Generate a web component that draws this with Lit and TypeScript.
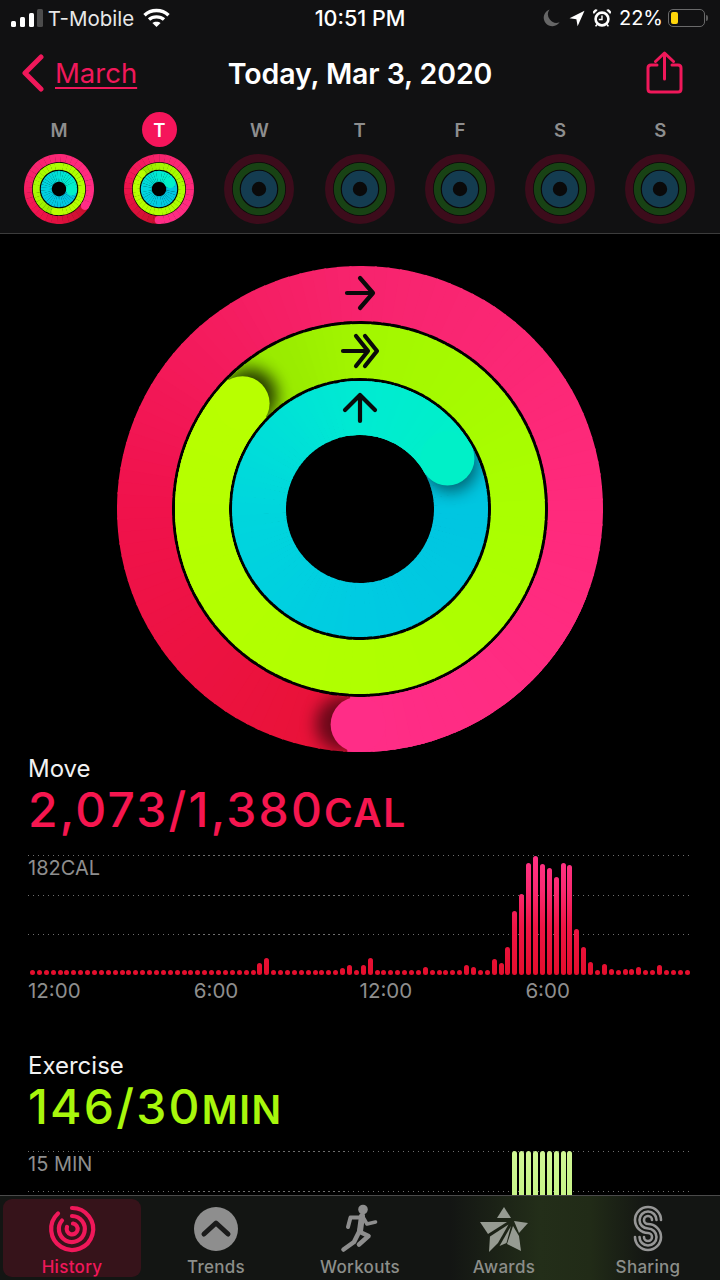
import { LitElement, css, html, svg } from 'lit';
import { customElement, property } from 'lit/decorators.js';

type Stop = [number, string];
interface Ring { r: number; w: number; cap: number; stops: Stop[]; shade?: number; }

const pt = (r: number, deg: number) => {
    const a = (deg * Math.PI) / 180;
    return [r * Math.sin(a), -r * Math.cos(a)];
};

const hex = (c: string) => [1, 3, 5].map((i) => parseInt(c.slice(i, i + 2), 16));

const colorAt = (stops: Stop[], off: number) => {
    for (let i = 1; i < stops.length; i++) {
        if (off <= stops[i][0]) {
            const [a, ca] = stops[i - 1];
            const [b, cb] = stops[i];
            const t = (off - a) / (b - a);
            const x = hex(ca);
            const y = hex(cb);
            return `rgb(${x.map((v, j) => Math.round(v + (y[j] - v) * t)).join(',')})`;
        }
    }
    return stops[stops.length - 1][1];
};

const arcs = (ring: Ring, from: number, to: number, step: number) => {
    const out = [];
    for (let off = from; off < to; off += step) {
        const [x0, y0] = pt(ring.r, ring.cap + off);
        const [x1, y1] = pt(ring.r, ring.cap + off + step + 0.5);
        out.push(svg`<path d="M${x0} ${y0}A${ring.r} ${ring.r} 0 0 1 ${x1} ${y1}" stroke=${colorAt(ring.stops, off)} stroke-width=${ring.w} fill="none"/>`);
    }
    return out;
};

const redStops = (first: string): Stop[] => [[0, first], [90, '#f0124c'], [180, '#f7246e'], [270, '#ff2a7c'], [360, '#ff2d87']];
const greenStops: Stop[] = [[0, '#94e400'], [49, '#a3f700'], [139, '#aaff00'], [229, '#b0ff00'], [360, '#b8ff00']];
const blueStops: Stop[] = [[0, '#00c4e0'], [119, '#00cbe2'], [209, '#00d6dd'], [299, '#00ebd2'], [360, '#00f0c8']];

const bigRings: Ring[] = [
    { r: 215.5, w: 55, cap: 180.5, stops: redStops('#e81236'), shade: 0.55 },
    { r: 158, w: 54, cap: 312, stops: greenStops, shade: 0.75 },
    { r: 101, w: 54, cap: 60, stops: blueStops, shade: 0.5 },
];

const smallRings = (caps: number[]): Ring[] => [
    { r: 215, w: 56, cap: caps[0], stops: redStops('#c90f2c') },
    { r: 158, w: 48, cap: caps[1], stops: greenStops },
    { r: 88, w: 76, cap: caps[2], stops: blueStops },
];

const capDot = (ring: Ring) => {
    const [x, y] = pt(ring.r, ring.cap);
    return svg`<circle cx=${x} cy=${y} r=${ring.w / 2} fill=${ring.stops[ring.stops.length - 1][1]}/>`;
};

function bigActivity() {
    return svg`<svg class="big" viewBox="-243 -243 486 486">
        <defs>
            <filter id="soft" x="-60%" y="-60%" width="220%" height="220%"><feGaussianBlur stdDeviation="8"/></filter>
            ${bigRings.map((g, i) => svg`<clipPath id=${`band${i}`}>
                <path clip-rule="evenodd" d="M${-g.r - g.w / 2} 0a${g.r + g.w / 2} ${g.r + g.w / 2} 0 1 0 ${2 * g.r + g.w} 0a${g.r + g.w / 2} ${g.r + g.w / 2} 0 1 0 ${-2 * g.r - g.w} 0ZM${-g.r + g.w / 2} 0a${g.r - g.w / 2} ${g.r - g.w / 2} 0 1 0 ${2 * g.r - g.w} 0a${g.r - g.w / 2} ${g.r - g.w / 2} 0 1 0 ${-2 * g.r + g.w} 0Z"/>
            </clipPath>`)}
        </defs>
        ${bigRings.map((g, i) => {
            const [sx, sy] = pt(g.r, g.cap + 4);
            return svg`
                ${arcs(g, 0, 360, 3)}
                <g clip-path=${`url(#band${i})`}>
                    <circle cx=${sx} cy=${sy} r=${g.w / 2} fill="#000" opacity=${g.shade} filter="url(#soft)"/>
                </g>
                ${arcs(g, 290, 360, 3)}
                ${capDot(g)}`;
        })}
        <g fill="none" stroke="#0a0a0a" stroke-width="4.2" stroke-linecap="round" stroke-linejoin="round">
            <path d="M-13 -216H13M0 -231L13 -216L0 -201"/>
            <path d="M-17 -158H8M-4 -173L8 -158L-4 -143M5 -173L17 -158L5 -143"/>
            <path d="M0 -88V-114M-15 -99L0 -114L15 -99"/>
        </g>
    </svg>`;
}

function miniActivity(caps: number[]) {
    const rings = smallRings(caps);
    return svg`<svg class="mini" viewBox="-243 -243 486 486">
        <circle r="190" fill="#000"/>
        ${rings.map((g) => svg`${arcs(g, 0, 360, 10)}${capDot(g)}`)}
    </svg>`;
}

const dimActivity = svg`<svg class="mini" viewBox="-243 -243 486 486">
    <circle r="190" fill="#0a0a0a"/>
    <circle r="215" fill="none" stroke="#3c0c1b" stroke-width="56"/>
    <circle r="158" fill="none" stroke="#184214" stroke-width="48"/>
    <circle r="88" fill="none" stroke="#143c50" stroke-width="76"/>
</svg>`;

const moveBars: Record<number, number> = {
    33: 12, 34: 17, 45: 7, 46: 10, 48: 10, 49: 17, 57: 8, 63: 10, 64: 8, 67: 16, 68: 12,
    69: 28, 70: 64, 71: 81, 72: 112, 73: 119, 74: 111, 75: 107, 76: 98, 77: 112, 78: 110,
    79: 46, 80: 28, 81: 13, 83: 11, 84: 6, 86: 6, 87: 6, 88: 8, 91: 10,
};

const exerciseBars: Record<number, number> = { 70: 120, 71: 120, 72: 120, 73: 120, 74: 120, 75: 120, 76: 120, 77: 120, 78: 120 };

@customElement('bar-chart')
export class BarChart extends LitElement {
    static styles = css`
        :host { display: block; padding: 0 29px 0 28px; }
        .plot { display: grid; height: 120px; }
        .plot > * { grid-area: 1 / 1; }
        .lines { display: flex; flex-direction: column; }
        .lines i {
            display: block;
            height: 39.5px;
            background: repeating-linear-gradient(90deg, #6e6e6e 0 1.5px, transparent 1.5px 5px) top / 100% 1px no-repeat;
        }
        .cap { font-size: 20px; line-height: 26px; color: #8e8e8e; }
        .bars { display: flex; align-items: flex-end; margin-left: 2px; gap: 1.905px; }
        .bars i {
            display: block;
            flex: none;
            width: 5px;
            border-radius: 2.5px;
            background-size: 5px 120px;
            background-position: bottom;
        }
        .move i { background-image: linear-gradient(to top, #e40e2c 0, #ee1544 40%, #fb2a72 72%, #ff3386 100%); }
        .exercise i { background-image: linear-gradient(to top, #b8ee70, #d0f795); }
        .axis { display: grid; grid-template-columns: repeat(4, 165.8px); font-size: 20.5px; line-height: 24px; color: #8e8e8e; margin-top: 4px; }
    `;

    @property() kind = 'move';
    @property() cap = '';
    @property({ type: Object }) data: Record<number, number> = {};
    @property({ type: Boolean }) axis = false;

    render() {
        const all = Array.from({ length: 96 }, (_, i) => this.data[i] ?? (this.kind === 'move' ? 5 : 0));
        return html`
            <div class="plot">
                <div class="lines"><i></i><i></i><i></i></div>
                <div class="cap">${this.cap}</div>
                <div class="bars ${this.kind}">
                    ${all.map((h) => html`<i style="height:${h}px"></i>`)}
                </div>
            </div>
            ${this.axis ? html`<div class="axis"><span>12:00</span><span>6:00</span><span>12:00</span><span>6:00</span></div>` : ''}
        `;
    }
}

@customElement('app-root')
export class AppRoot extends LitElement {
    static styles = css`
        :host {
            display: flex;
            flex-direction: column;
            width: 720px;
            height: 1280px;
            overflow: hidden;
            background: #000;
            color: #fff;
            font-family: Inter, "Noto Sans", sans-serif;
        }
        .top { background: #111112; border-bottom: 1px solid #3c3c3c; height: 233px; flex: none; }

        .status { display: grid; grid-template-columns: 1fr auto 1fr; align-items: center; height: 36px; padding: 0 12px; font-size: 20px; }
        .status .left { display: flex; align-items: center; margin-left: -1px; }
        .status .carrier { margin-left: 5px; font-size: 20.5px; color: #e8e8e8; }
        .status .wifi { margin-left: 9px; }
        .status .clock { font-size: 21.5px; font-weight: 500; }
        .status .right { display: flex; align-items: center; justify-content: flex-end; gap: 8px; }
        .signal { display: flex; align-items: flex-end; gap: 3.4px; height: 18px; }
        .signal i { display: block; width: 5.4px; background: #fff; border-radius: 1.5px; }
        .signal i:nth-child(1) { height: 6px; }
        .signal i:nth-child(2) { height: 10px; }
        .signal i:nth-child(3) { height: 14px; }
        .signal i:nth-child(4) { height: 18px; background: #4c4c4c; }
        .battery { display: flex; align-items: center; gap: 1px; margin-left: -3px; }
        .battery .shell { width: 37px; height: 18px; border: 1.5px solid #6a6a6a; border-radius: 5px; box-sizing: border-box; padding: 2px; }
        .battery .shell i { display: block; width: 7px; height: 100%; border-radius: 2px; background: #ffd60a; }
        .battery .nub { width: 2px; height: 6px; background: #5c5c5c; border-radius: 0 2px 2px 0; }

        .nav { display: grid; grid-template-columns: 1fr auto 1fr; align-items: center; height: 74px; padding: 0 22px; }
        .back { display: flex; align-items: center; gap: 11px; color: #f0185a; font-size: 27.5px; }
        .back span { text-decoration: underline; text-decoration-thickness: 1.5px; text-underline-offset: 4px; }
        .title { font-size: 28.5px; font-weight: 600; letter-spacing: -0.1px; }
        .share { width: 37px; height: 44px; display: block; justify-self: end; margin-right: 15px; }

        .week { display: grid; grid-template-columns: repeat(7, 100.2px); padding-left: 9px; margin-top: 2px; }
        .day { display: flex; flex-direction: column; align-items: center; gap: 7px; }
        .day b { display: flex; align-items: center; justify-content: center; width: 35px; height: 35px; border-radius: 50%; font-size: 18.5px; font-weight: 600; color: #8e8e8e; }
        .day.on b { background: #f5155b; color: #fff; }
        .mini { display: block; width: 70px; height: 70px; }

        .scroll { flex: 1; min-height: 0; overflow: hidden; }
        .big { display: block; width: 486px; height: 486px; margin: 32px auto 0; }
        .metric { padding: 0 0 0 28px; }
        .metric .name { font-size: 24px; line-height: 30px; color: #f2f2f2; }
        .metric .value { font-size: 48px; line-height: 52px; font-weight: 500; letter-spacing: 2.2px; white-space: nowrap; }
        .metric .value small { font-size: 39px; font-weight: 600; letter-spacing: 1.5px; }
        .move-metric { margin-top: 2px; }
        .move-metric .value { color: #f5164f; }
        .exercise-metric { margin-top: 48px; }
        .exercise-metric .value { color: #a8f70c; }
        bar-chart { margin-top: 16px; }
        bar-chart.second { margin-top: 15px; }

        .tabs {
            flex: none;
            height: 85px;
            box-sizing: border-box;
            border-top: 1px solid #4a4a4a;
            display: grid;
            grid-template-columns: repeat(5, 144px);
            background: linear-gradient(90deg, #131513 0, #131513 450px, #232e19 540px, #212b17 590px, #131513 650px);
        }
        .tab { display: flex; flex-direction: column; align-items: center; color: #8c8e8a; font-size: 17px; font-weight: 500; letter-spacing: 0.3px; padding-top: 3px; }
        .tab svg { display: block; width: 60px; height: 60px; }
        .tab span { margin-top: -2px; line-height: 20px; }
        .tab.on { color: #f0185a; background: #36131a; margin: 3px 3px 4px 3px; border-radius: 9px; padding-top: 0; }
    `;

    render() {
        return html`
            <div class="top">
                <div class="status">
                    <div class="left">
                        <div class="signal"><i></i><i></i><i></i><i></i></div>
                        <span class="carrier">T-Mobile</span>
                        <svg class="wifi" width="27" height="20" viewBox="0 0 27 20" fill="none" stroke="#fff" stroke-width="3.4">
                            <path d="M1.5 7.2C8 1 19 1 25.5 7.2"/>
                            <path d="M6 11.6C10 8 17 8 21 11.6"/>
                            <path d="M13.5 19L9.4 15C11.5 13.3 15.5 13.3 17.6 15Z" fill="#fff" stroke="none"/>
                        </svg>
                    </div>
                    <span class="clock">10:51 PM</span>
                    <div class="right">
                        <svg width="17" height="18" viewBox="0 0 17 18"><path d="M6.5 0.5A8.6 8.6 0 1 0 16.6 13.2A8.5 8.5 0 0 1 6.5 0.5Z" fill="#666"/></svg>
                        <svg width="16" height="17" viewBox="0 0 16 17" style="margin-left:1px"><path d="M0.5 8.2L15.5 0.8L8.6 16.2L7.4 9.3Z" fill="#fff"/></svg>
                        <svg width="18" height="18" viewBox="0 0 18 18" fill="none">
                            <circle cx="9" cy="10" r="6.4" stroke="#fff" stroke-width="2.6"/>
                            <path d="M9 6.5V10.5H5.8" stroke="#fff" stroke-width="1.4"/>
                            <path d="M0.8 4.4L4.2 1.2A2.4 2.4 0 0 0 0.8 4.4ZM17.2 4.4L13.8 1.2A2.4 2.4 0 0 1 17.2 4.4Z" fill="#fff" stroke="#fff"/>
                            <path d="M4 15.5L2.6 17.4M14 15.5L15.4 17.4" stroke="#fff" stroke-width="1.6"/>
                        </svg>
                        <span>22%</span>
                        <div class="battery"><div class="shell"><i></i></div><div class="nub"></div></div>
                    </div>
                </div>
                <div class="nav">
                    <div class="back">
                        <svg width="22" height="38" viewBox="0 0 22 38" fill="none" stroke="#f0185a" stroke-width="5" stroke-linecap="round" stroke-linejoin="round"><path d="M19 3L3 19L19 35"/></svg>
                        <span>March</span>
                    </div>
                    <div class="title">Today, Mar 3, 2020</div>
                    <svg class="share" viewBox="0 0 37 44" fill="none" stroke="#f0185a" stroke-width="3" stroke-linecap="round" stroke-linejoin="round">
                        <path d="M11 14H5Q2 14 2 17V38Q2 41 5 41H32Q35 41 35 38V17Q35 14 32 14H26"/>
                        <path d="M18.5 28V2.5M9.5 10.5L18.5 2L27.5 10.5"/>
                    </svg>
                </div>
                <div class="week">
                    <div class="day"><b>M</b>${miniActivity([123, 190, 95])}</div>
                    <div class="day on"><b>T</b>${miniActivity([180.5, 312, 60])}</div>
                    ${['W', 'T', 'F', 'S', 'S'].map((d) => html`<div class="day"><b>${d}</b>${dimActivity}</div>`)}
                </div>
            </div>

            <div class="scroll">
                ${bigActivity()}
                <div class="metric move-metric">
                    <div class="name">Move</div>
                    <div class="value">2,073/1,380<small>CAL</small></div>
                </div>
                <bar-chart kind="move" cap="182CAL" axis .data=${moveBars}></bar-chart>
                <div class="metric exercise-metric">
                    <div class="name">Exercise</div>
                    <div class="value">146/30<small>MIN</small></div>
                </div>
                <bar-chart class="second" kind="exercise" cap="15 MIN" .data=${exerciseBars}></bar-chart>
            </div>

            <div class="tabs">
                <div class="tab on">
                    <svg viewBox="0 0 60 60" fill="none" stroke="#f0185a" stroke-width="4.2" stroke-linecap="round">
                        <path d="M30 9A21 21 0 1 1 16 14.5"/>
                        <path d="M30 17A13 13 0 1 1 20 21.5"/>
                        <path d="M31 24.5A5.5 5.5 0 1 1 25 28"/>
                    </svg>
                    <span>History</span>
                </div>
                <div class="tab">
                    <svg viewBox="0 0 60 60"><circle cx="30" cy="30" r="22" fill="#8e8e8e"/><path d="M18 35L30 24L42 35" fill="none" stroke="#1b1b1b" stroke-width="5" stroke-linecap="round" stroke-linejoin="round"/></svg>
                    <span>Trends</span>
                </div>
                <div class="tab">
                    <svg viewBox="0 0 60 60" fill="none" stroke="#8e8e8e" stroke-width="4.6" stroke-linecap="round" stroke-linejoin="round">
                        <circle cx="33" cy="10.5" r="4.8" fill="#8e8e8e" stroke="none"/>
                        <path d="M18 28L20.5 18.5H32.5L29 33" stroke-width="4"/>
                        <path d="M32 17L30 32" stroke-width="6"/>
                        <path d="M33.5 19L37 25L45.5 23" stroke-width="3.6"/>
                        <path d="M29 33L24 43L13.5 50.5"/>
                        <path d="M30 33L38.5 37L29 45.5"/>
                    </svg>
                    <span>Workouts</span>
                </div>
                <div class="tab">
                    <svg viewBox="0 0 60 60" fill="#969b92">
                        <path d="M30 8L23 19H37Z"/>
                        <path d="M6 23L33 23L14 35Z"/>
                        <path d="M40 22L54 24L45 34Z"/>
                        <path d="M16 37.5L34.5 25.5L24 44L15 53Z"/>
                        <path d="M37 27L32.5 44L25.5 47Z"/>
                        <path d="M39 27L45 37L47 52L33 45Z"/>
                    </svg>
                    <span>Awards</span>
                </div>
                <div class="tab">
                    <svg viewBox="0 0 60 60" fill="none" stroke="#969696" stroke-width="2.6" stroke-linecap="round">
                        <path d="M43 21A13 13 0 1 0 30 34A4 4 0 1 1 26 38"/>
                        <path d="M38.5 21A8.5 8.5 0 1 0 30 29.5A8.5 8.5 0 1 1 21.5 38"/>
                        <path d="M34 21A4 4 0 1 0 30 25A13 13 0 1 1 17 38"/>
                    </svg>
                    <span>Sharing</span>
                </div>
            </div>
        `;
    }
}
